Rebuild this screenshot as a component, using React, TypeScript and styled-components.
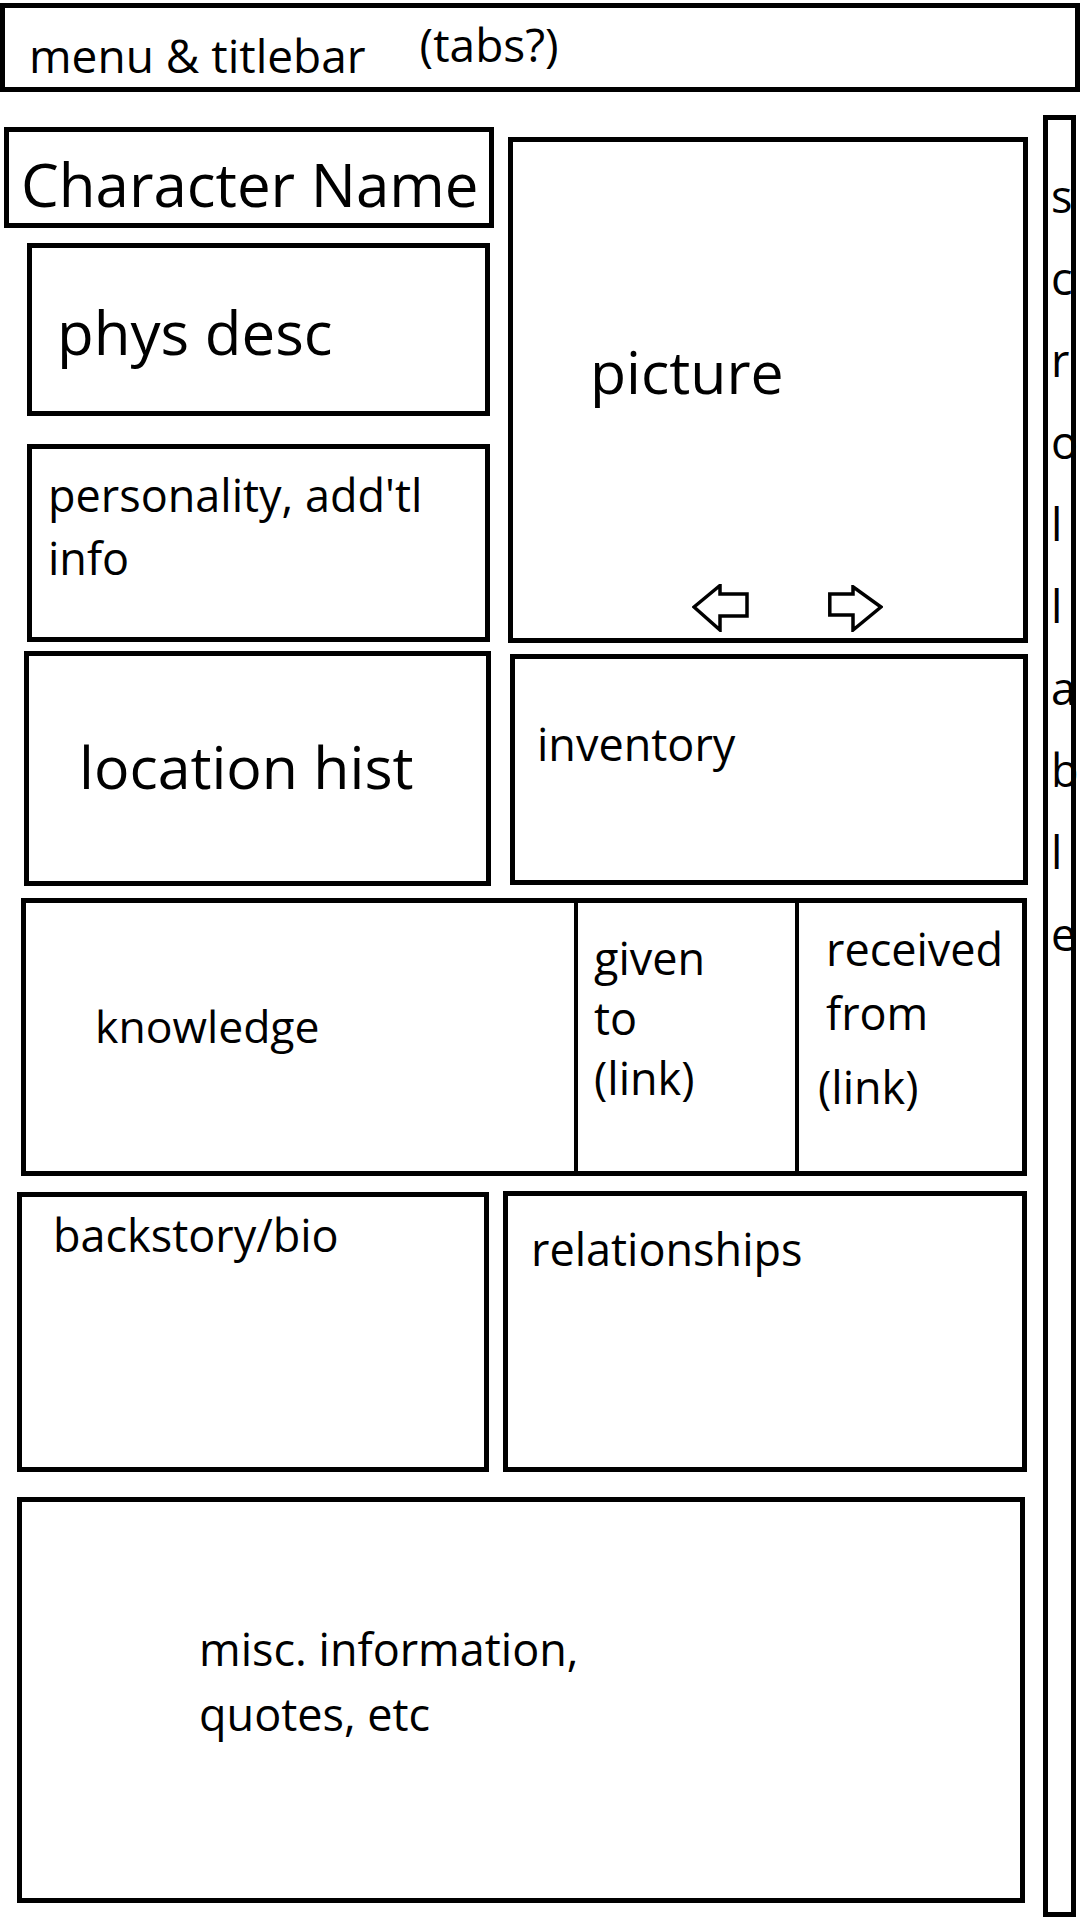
import React from "react";
import styled, { createGlobalStyle } from "styled-components";

const GlobalStyle = createGlobalStyle`
  html, body { margin: 0; padding: 0; background: #ffffff; }
  body { font-family: "Open Sans", "Noto Sans", "DejaVu Sans", sans-serif; color: #000000; }
  * { box-sizing: border-box; }
`;

const Page = styled.div`
  width: 1080px;
  height: 1920px;
  padding-top: 3px;
  overflow: hidden;
  background: #ffffff;
`;

const TitleBar = styled.header`
  width: 1080px;
  height: 89px;
  border: 5px solid #000;
  display: flex;
  align-items: flex-start;
  padding-left: 24px;
`;

const TitleText = styled.span<{ $mt: number; $ml?: number }>`
  font-size: 46px;
  line-height: 46px;
  margin-top: ${(p) => p.$mt}px;
  margin-left: ${(p) => p.$ml ?? 0}px;
  white-space: nowrap;
`;

const Body = styled.div`
  display: flex;
  align-items: flex-start;
`;

const Main = styled.main`
  width: 1043px;
  display: flex;
  flex-direction: column;
`;

const Row = styled.div<{ $mt?: number }>`
  display: flex;
  align-items: flex-start;
  margin-top: ${(p) => p.$mt ?? 0}px;
`;

const Column = styled.div`
  display: flex;
  flex-direction: column;
`;

const Panel = styled.section<{
  $w: number;
  $h: number;
  $mt?: number;
  $ml?: number;
  $pt?: number;
  $pl?: number;
}>`
  width: ${(p) => p.$w}px;
  height: ${(p) => p.$h}px;
  margin-top: ${(p) => p.$mt ?? 0}px;
  margin-left: ${(p) => p.$ml ?? 0}px;
  padding-top: ${(p) => p.$pt ?? 0}px;
  padding-left: ${(p) => p.$pl ?? 0}px;
  border: 5px solid #000;
  display: flex;
  flex-direction: column;
  flex-shrink: 0;
`;

const PicturePanel = styled(Panel)`
  padding-left: 0;
`;

const Label = styled.div<{ $size: number; $lh?: number; $ml?: number }>`
  font-size: ${(p) => p.$size}px;
  line-height: ${(p) => p.$lh ?? p.$size}px;
  margin-left: ${(p) => p.$ml ?? 0}px;
  white-space: pre-line;
`;

const ArrowRow = styled.div`
  margin-top: auto;
  padding-left: 179px;
  padding-bottom: 6px;
  display: flex;
  align-items: flex-end;
  gap: 79px;
`;

const ArrowButton = styled.button`
  border: none;
  background: transparent;
  padding: 0;
  margin: 0;
  display: block;
  line-height: 0;
  cursor: pointer;
`;

const SplitPanel = styled.section`
  width: 1006px;
  height: 278px;
  margin-left: 21px;
  border: 5px solid #000;
  display: grid;
  grid-template-columns: 548px 221px 1fr;
`;

const Cell = styled.div<{ $divider?: boolean; $pt: number; $pl: number }>`
  border-left: ${(p) => (p.$divider ? "4px solid #000" : "none")};
  padding-top: ${(p) => p.$pt}px;
  padding-left: ${(p) => p.$pl}px;
`;

const LinkLine = styled.div<{ $mt: number; $ml: number }>`
  font-size: 45px;
  line-height: 60px;
  margin-top: ${(p) => p.$mt}px;
  margin-left: ${(p) => p.$ml}px;
`;

const ScrollBar = styled.aside`
  width: 33px;
  height: 1802px;
  margin-top: 23px;
  border: 5px solid #000;
  padding-top: 35px;
  padding-left: 3px;
  display: flex;
  flex-direction: column;
  overflow: visible;
`;

const ScrollLetter = styled.span`
  font-size: 45px;
  line-height: 82px;
  height: 82px;
  display: block;
`;

const LeftArrow = () => (
  <svg width="57" height="48" viewBox="0 0 57 48">
    <polygon
      points="2,23 28,1.5 28,10 55,10 55,32 28,32 28,46"
      fill="#fff"
      stroke="#000"
      strokeWidth="3.5"
      strokeLinejoin="miter"
    />
  </svg>
);

const RightArrow = () => (
  <svg width="55" height="47" viewBox="0 0 55 47">
    <polygon
      points="1.8,9 25,9 25,1.8 53,22 25,45 25,30 1.8,30"
      fill="#fff"
      stroke="#000"
      strokeWidth="3.5"
      strokeLinejoin="miter"
    />
  </svg>
);

export default function App() {
  return (
    <>
      <GlobalStyle />
      <Page>
        <TitleBar>
          <TitleText $mt={24}>menu &amp; titlebar</TitleText>
          <TitleText $mt={13} $ml={54}>(tabs?)</TitleText>
        </TitleBar>
        <Body>
          <Main>
            <Row>
              <Column>
                <Panel $w={490} $h={101} $mt={35} $ml={4} $pt={22} $pl={12}>
                  <Label $size={60}>Character Name</Label>
                </Panel>
                <Panel $w={463} $h={173} $mt={15} $ml={27} $pt={54} $pl={25}>
                  <Label $size={60}>phys desc</Label>
                </Panel>
                <Panel $w={463} $h={198} $mt={28} $ml={27} $pt={14} $pl={16}>
                  <Label $size={45} $lh={63}>{"personality, add'tl\ninfo"}</Label>
                </Panel>
              </Column>
              <PicturePanel $w={520} $h={506} $mt={45} $ml={14} $pt={200}>
                <Label $size={59} $ml={77}>picture</Label>
                <ArrowRow>
                  <ArrowButton aria-label="previous picture">
                    <LeftArrow />
                  </ArrowButton>
                  <ArrowButton aria-label="next picture">
                    <RightArrow />
                  </ArrowButton>
                </ArrowRow>
              </PicturePanel>
            </Row>
            <Row>
              <Panel $w={467} $h={235} $mt={8} $ml={24} $pt={81} $pl={50}>
                <Label $size={59}>location hist</Label>
              </Panel>
              <Panel $w={518} $h={231} $mt={11} $ml={19} $pt={62} $pl={22}>
                <Label $size={45}>inventory</Label>
              </Panel>
            </Row>
            <Row $mt={12}>
              <SplitPanel>
                <Cell $pt={101} $pl={69}>
                  <Label $size={44.5}>knowledge</Label>
                </Cell>
                <Cell $divider $pt={25} $pl={16}>
                  <Label $size={45} $lh={60}>{"given\nto\n(link)"}</Label>
                </Cell>
                <Cell $divider $pt={14} $pl={27}>
                  <Label $size={45} $lh={64}>{"received\nfrom"}</Label>
                  <LinkLine $mt={12} $ml={-8}>(link)</LinkLine>
                </Cell>
              </SplitPanel>
            </Row>
            <Row $mt={15}>
              <Panel $w={472} $h={280} $mt={1} $ml={17} $pt={15} $pl={31}>
                <Label $size={45}>backstory/bio</Label>
              </Panel>
              <Panel $w={524} $h={281} $ml={14} $pt={30} $pl={23}>
                <Label $size={45}>relationships</Label>
              </Panel>
            </Row>
            <Row $mt={25}>
              <Panel $w={1008} $h={406} $ml={17} $pt={114} $pl={177}>
                <Label $size={45} $lh={65}>{"misc. information,\nquotes, etc"}</Label>
              </Panel>
            </Row>
          </Main>
          <ScrollBar>
            {"scrollable".split("").map((ch, i) => (
              <ScrollLetter key={i}>{ch}</ScrollLetter>
            ))}
          </ScrollBar>
        </Body>
      </Page>
    </>
  );
}
